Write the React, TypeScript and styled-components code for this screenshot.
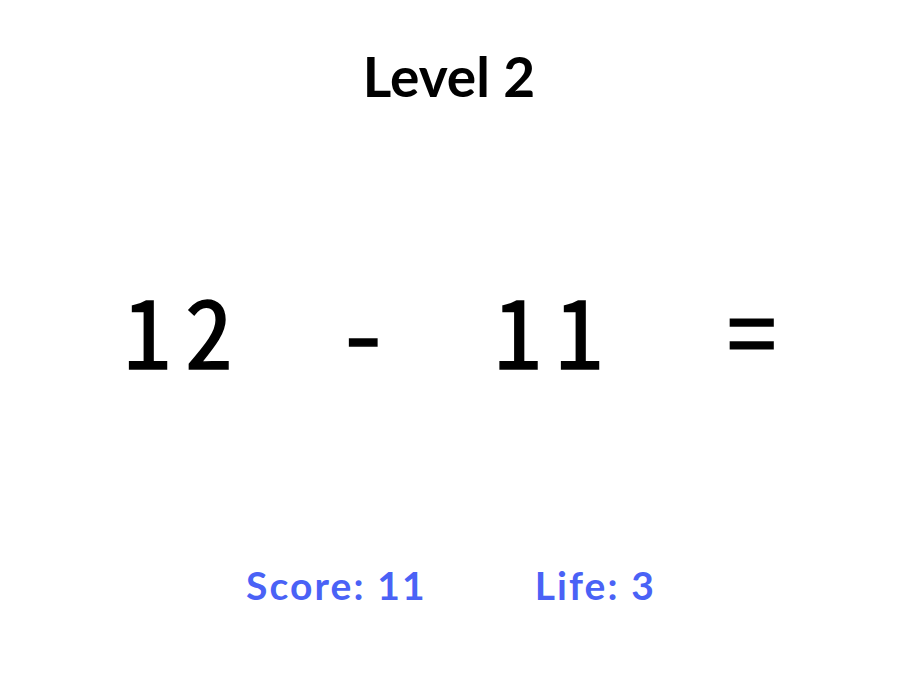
import React from "react";
import styled, { createGlobalStyle } from "styled-components";

const GlobalStyle = createGlobalStyle`
  body {
    margin: 0;
    background: #ffffff;
  }
`;

const Page = styled.div`
  width: 898px;
  display: flex;
  flex-direction: column;
  align-items: center;
`;

const Title = styled.h1`
  margin: 42px 0 0;
  font-family: Lato, "Liberation Sans", sans-serif;
  font-weight: 700;
  font-size: 55px;
  line-height: 68px;
  color: #000000;
`;

const Equation = styled.div`
  margin-top: 158px;
  padding-left: 15px;
  display: flex;
  align-items: center;
  gap: 93px;
  font-family: "Noto Sans Mono CJK JP", "DejaVu Sans Mono", monospace;
  font-weight: 400;
  font-size: 95px;
  line-height: 120px;
  color: #000000;
  -webkit-text-stroke: 1.6px #000000;
`;

const Term = styled.span<{ $wide?: boolean }>`
  letter-spacing: 14px;
  margin-left: ${(p) => (p.$wide ? "18px" : "0")};
`;

const Stats = styled.div`
  margin-top: 174px;
  padding-left: 4px;
  display: flex;
  gap: 108px;
  font-family: Lato, "Liberation Sans", sans-serif;
  font-weight: 700;
  font-size: 39px;
  line-height: 46px;
  letter-spacing: 2.1px;
  color: #4a62f6;
`;

type GameState = {
  level: number;
  left: number;
  op: string;
  right: number;
  score: number;
  life: number;
};

const game: GameState = { level: 2, left: 12, op: "-", right: 11, score: 11, life: 3 };

export default function App(): JSX.Element {
  return (
    <Page>
      <GlobalStyle />
      <Title>Level {game.level}</Title>
      <Equation>
        <Term>{game.left}</Term>
        <Term>{game.op}</Term>
        <Term>{game.right}</Term>
        <Term $wide>=</Term>
      </Equation>
      <Stats>
        <span>Score: {game.score}</span>
        <span>Life: {game.life}</span>
      </Stats>
    </Page>
  );
}
